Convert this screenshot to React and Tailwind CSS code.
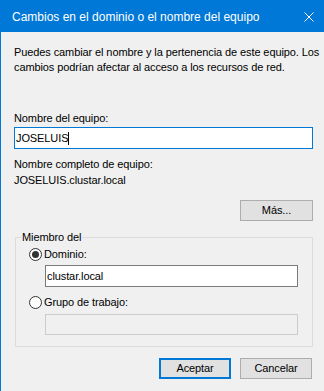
import React from "react";

function Radio({ checked }) {
  return (
    <span className="w-[13px] h-[13px] rounded-full border border-[#333333] bg-white flex items-center justify-center shrink-0">
      {checked && <span className="w-[7px] h-[7px] rounded-full bg-[#333333]" />}
    </span>
  );
}

export default function App() {
  return (
    <div
      className="w-[324px] h-[391px] bg-[#f0f0f0] flex flex-col text-black overflow-hidden"
      style={{ fontFamily: '"Liberation Sans", Arial, sans-serif' }}
    >
      {/* Title bar */}
      <div className="h-[32px] bg-[#0078d7] flex items-start justify-between pl-[12px] pr-[10px] shrink-0">
        <span className="text-white text-[12px] leading-[15px] pt-[10px]">
          Cambios en el dominio o el nombre del equipo
        </span>
        <svg width="10" height="10" viewBox="0 0 10 10" className="mt-[12px]">
          <path d="M0.5 0.5 L9.5 9.5 M9.5 0.5 L0.5 9.5" stroke="white" strokeWidth="1" />
        </svg>
      </div>

      {/* Body */}
      <div className="flex-1 flex flex-col border-l border-[#0078d7] pl-[13px] pr-[11px] text-[11px] leading-[15px] tracking-[-0.1px]">
        <p className="mt-[13px] whitespace-nowrap">
          Puedes cambiar el nombre y la pertenencia de este equipo. Los
          <br />
          cambios podrían afectar al acceso a los recursos de red.
        </p>

        <div className="mt-[36px]">Nombre del equipo:</div>
        <div className="mt-[1px] h-[22px] border border-[#0078d7] bg-white flex items-center pl-[1px]">
          <span>JOSELUIS</span>
          <span className="w-px h-[13px] bg-black" />
        </div>

        <div className="mt-[8px]">Nombre completo de equipo:</div>
        <div className="mt-[1px]">JOSELUIS.clustar.local</div>

        <button className="mt-[12px] self-end w-[73px] h-[21px] bg-[#e1e1e1] border border-[#adadad] flex items-center justify-center">
          Más...
        </button>

        {/* Miembro del */}
        <fieldset className="mt-[9px] ml-[1px] border border-[#dcdcdc] pb-[11px]">
          <legend className="ml-[5px] px-[1px]">Miembro del</legend>
          <div className="mt-[2px] flex items-center ml-[13px] gap-[2px]">
            <Radio checked />
            <span>Dominio:</span>
          </div>
          <div className="mt-[3px] ml-[29px] w-[253px] h-[22px] border border-[#7a7a7a] bg-white flex items-center pl-[1px]">
            clustar.local
          </div>
          <div className="mt-[8px] flex items-center ml-[13px] gap-[2px]">
            <Radio />
            <span>Grupo de trabajo:</span>
          </div>
          <div className="mt-[4px] ml-[29px] w-[253px] h-[21px] border border-[#cccccc] bg-[#f0f0f0]" />
        </fieldset>

        {/* Actions */}
        <div className="mt-[11px] mr-[1px] flex justify-end gap-[9px]">
          <button className="w-[72px] h-[21px] bg-[#e1e1e1] border-2 border-[#0078d7] flex items-center justify-center">
            Aceptar
          </button>
          <button className="w-[72px] h-[21px] bg-[#e1e1e1] border border-[#adadad] flex items-center justify-center">
            Cancelar
          </button>
        </div>
      </div>
    </div>
  );
}
